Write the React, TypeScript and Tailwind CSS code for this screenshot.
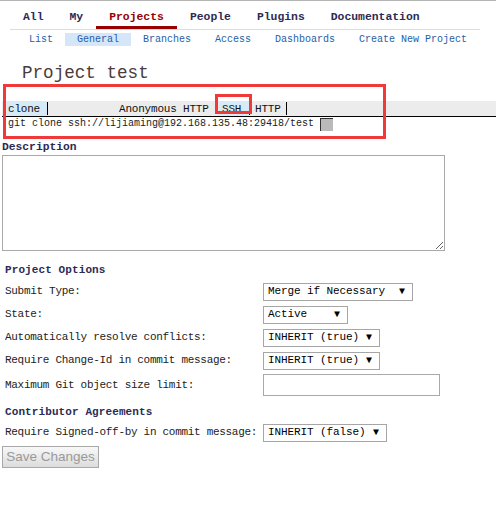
import { useState } from 'react';

const mono = 'font-["Liberation_Mono","DejaVu_Sans_Mono",monospace]';

const tabs = ['All', 'My', 'Projects', 'People', 'Plugins', 'Documentation'];
const subTabs = ['List', 'General', 'Branches', 'Access', 'Dashboards', 'Create New Project'];

function FakeSelect({ value, width }: { value: string; width: string }) {
  return (
    <div
      className={`${width} h-[18px] flex items-center justify-between border border-[#a6a6a6] bg-white pl-[4px] pr-[7px] text-[11px] tracking-[-0.1px] text-black`}
    >
      <span className="whitespace-pre">{value}</span>
      <span className="text-[10px] leading-none">▼</span>
    </div>
  );
}

function Row({ label, children, h = 'h-[23px]' }: { label: string; children: React.ReactNode; h?: string }) {
  return (
    <div className={`flex items-center ${h}`}>
      <div className="w-[258px] whitespace-pre text-[11px] tracking-[-0.3px] text-[#222]">{label}</div>
      {children}
    </div>
  );
}

export default function App() {
  const [active] = useState('Projects');

  return (
    <div className={`relative w-[496px] h-[513px] bg-white overflow-hidden ${mono}`}>
      <div className="h-px bg-[#b4b4b4]" />

      {/* top menu */}
      <div className="ml-[10px] w-[470px] border-b border-[#dcdcdc]">
        <div className="flex">
          {tabs.map((t) => (
            <div
              key={t}
              className={`h-[28px] px-[13px] pt-[8px] border-b-[3px] text-[11.4px] font-bold leading-[17px] ${
                t === active ? 'border-[#990000] text-[#990000]' : 'border-transparent text-[#2b2b55]'
              }`}
            >
              {t}
            </div>
          ))}
        </div>
      </div>

      {/* sub menu */}
      <div className="mt-[3px] ml-[17px] flex h-[13px]">
        {subTabs.map((t) => (
          <div
            key={t}
            className={`px-[12px] text-[10px] leading-[14px] text-[#1f5ea8] ${t === 'General' ? 'bg-[#d4e6f7]' : ''}`}
          >
            {t}
          </div>
        ))}
      </div>

      <div className="mt-[16px] h-[22px] pl-[22px] text-[17.6px] leading-[22px] text-[#4a3c3c]">Project test</div>

      {/* clone bar */}
      <div className="mt-[17px] ml-[2px] flex h-[16px] border-b border-black bg-[#ececec] text-[11px] tracking-[-0.2px] leading-[16px] text-[#111]">
        <div className="ml-[5px] w-[40px] bg-[#d6eaf8] pl-[1px]">clone</div>
        <div className="w-px my-[1px] bg-black" />
        <div className="ml-[71px] whitespace-pre">Anonymous HTTP </div>
        <div className="ml-[4px] w-[30px] bg-[#d6eaf8] pl-[3px]">SSH</div>
        <div className="w-px my-[1px] bg-black" />
        <div className="ml-[5px]">HTTP</div>
        <div className="ml-[5px] w-px my-[1px] bg-black" />
      </div>
      <div className="flex items-start h-[14px] pl-[8px] text-[10px] leading-[14px] text-[#222]">
        <span>git clone ssh://lijiaming@192.168.135.48:29418/test</span>
        <div className="ml-[6px] mt-[1px] h-[13px] w-[13px] border-l border-t border-[#333] bg-[#bababa]" />
      </div>

      {/* description */}
      <div className="mt-[9px] h-[14px] pl-[2px] text-[11.3px] font-bold leading-[15px] text-[#2b2b55]">Description</div>
      <textarea className="mt-px ml-[2px] block h-[96px] w-[443px] border border-[#a9a9a9] outline-none" />

      {/* options */}
      <div className="pl-[5px]">
        <div className="mt-[11px] h-[16px] text-[11px] font-bold leading-[16px] tracking-[0.1px] text-[#2b2b55]">Project Options</div>
        <div className="mt-[2px]">
          <Row label="Submit Type:">
            <FakeSelect value="Merge if Necessary" width="w-[150px]" />
          </Row>
          <Row label="State:">
            <FakeSelect value="Active" width="w-[85px]" />
          </Row>
          <Row label="Automatically resolve conflicts:">
            <FakeSelect value="INHERIT (true)" width="w-[117px]" />
          </Row>
          <Row label="Require Change-Id in commit message:">
            <FakeSelect value="INHERIT (true)" width="w-[117px]" />
          </Row>
          <Row label="Maximum Git object size limit:" h="h-[26px]">
            <input className="h-[22px] w-[177px] border border-[#a9a9a9] outline-none" />
          </Row>
        </div>
        <div className="mt-[6px] h-[16px] text-[11px] font-bold leading-[16px] tracking-[0.1px] text-[#2b2b55]">
          Contributor Agreements
        </div>
        <div className="mt-px">
          <Row label="Require Signed-off-by in commit message:">
            <FakeSelect value="INHERIT (false)" width="w-[124px]" />
          </Row>
        </div>
      </div>
      <button
        disabled
        className='mt-[2px] ml-[2px] block h-[22px] w-[97px] border border-[#a8a8a8] bg-gradient-to-b from-[#f8f8f8] to-[#dcdcdc] font-["Liberation_Sans",Arial,sans-serif] text-[13.5px] leading-[20px] text-[#9a9a9a]'
      >
        Save Changes
      </button>

      {/* annotation boxes */}
      <div className="absolute left-[3px] top-[84px] h-[55px] w-[383px] border-[3px] border-[#f03a3a]" />
      <div className="absolute left-[215px] top-[94px] h-[20px] w-[37px] border-[3px] border-[#f03a3a]" />
    </div>
  );
}
